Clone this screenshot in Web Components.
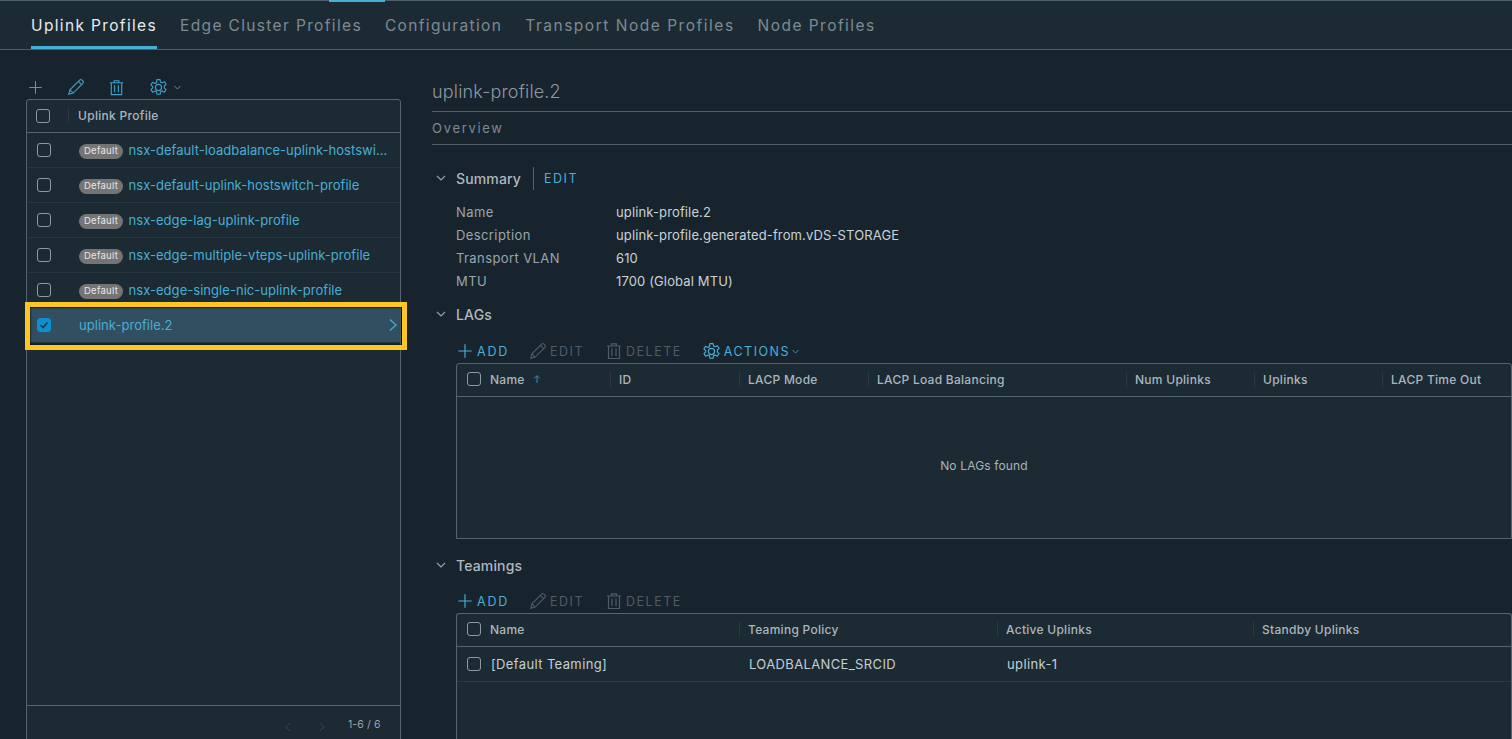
<!DOCTYPE html>
<html><head><meta charset="utf-8"><style>
html,body{margin:0;height:739px;overflow:hidden;background:#18242d;font-family:Inter,"Liberation Sans",sans-serif;color:#c3cdd3}
</style></head><body>
<nsx-page></nsx-page>
<script>
const ICONS={
plus:'<path d="M9 1.500v15M1.500 9h15" fill="none" stroke="currentColor" stroke-width="1.300"/>',
pencil:'<path d="M1.800 16.200l1.100-4.400L12.600 2.100a1.700 1.700 0 0 1 2.400 0l.9.9a1.700 1.700 0 0 1 0 2.400L6.200 15.100zM2.900 11.800l3.300 3.300M11.300 3.400l3.300 3.300" fill="none" stroke="currentColor" stroke-width="1.100"/>',
trash:'<path d="M2 4h14M6.500 4V1.800h5V4M3.500 4v12.500h11V4M7 6.500v7.500M11 6.500v7.500" fill="none" stroke="currentColor" stroke-width="1.200"/>',
gear:'<path d="M7.600 1.500h2.800l.4 2.200 1.400.7 2-1 1.500 2.300-1.600 1.500v1.600l1.600 1.500-1.500 2.300-2-1-1.400.7-.4 2.200H7.600l-.4-2.200-1.400-.7-2 1-1.500-2.300 1.600-1.500V7.700L2.300 6.200l1.500-2.300 2 1 1.400-.7z" fill="none" stroke="currentColor" stroke-width="1" stroke-linejoin="round"/><circle cx="9" cy="8.500" r="2.700" fill="none" stroke="currentColor" stroke-width="1"/>',
chev:'<path d="M3 6l6 6 6-6" fill="none" stroke="currentColor" stroke-width="1.600"/>',
right:'<path d="M5 2l8 7-8 7" fill="none" stroke="currentColor" stroke-width="1.500"/>',
left:'<path d="M13 2L5 9l8 7" fill="none" stroke="currentColor" stroke-width="1.500"/>',
up:'<path d="M9 16V3M4 8l5-5 5 5" fill="none" stroke="currentColor" stroke-width="1.800"/>'
};
const VB={gear:'1.500 1 15 15'};
class Base extends HTMLElement{
  constructor(){super();this.attachShadow({mode:'open'});}
  connectedCallback(){if(!this.shadowRoot.childNodes.length)this.shadowRoot.innerHTML=this.render();}
  a(n,d=''){return this.getAttribute(n)??d;}
}
const def=(n,c)=>customElements.define(n,c);
def('x-icon',class extends Base{render(){const s=this.a('size','18'),n=this.a('name');
 return `<style>:host{display:inline-flex;flex:none;width:${s}px;height:${s}px}svg{width:100%;height:100%;display:block}</style><svg viewBox="${VB[n]||'0 0 18 18'}">${ICONS[n]}</svg>`;}});
def('x-check',class extends Base{render(){const c=this.hasAttribute('checked');
 return `<style>:host{display:block;flex:none;width:12px;height:12px;border:1px solid #8d9aa3;border-radius:3px;background:${c?'#0d8fd0':'transparent'};border-color:${c?'#0d8fd0':'#8d9aa3'}}
 svg{display:block;width:12px;height:12px}</style>${c?'<svg viewBox="0 0 12 12"><path d="M2.500 6l2.500 2.500 4.500-5" fill="none" stroke="#17384d" stroke-width="1.600"/></svg>':''}`;}});
def('x-tab',class extends Base{render(){const on=this.hasAttribute('active');
 return `<style>:host{display:block;height:45px;line-height:49px;font-size:15.500px;letter-spacing:1.350px;white-space:nowrap;color:${on?'#e6ecef':'#7d8a93'};border-bottom:3px solid ${on?'#49afd9':'transparent'}}</style><slot></slot>`;}});
def('x-tabs',class extends Base{render(){return `<style>:host{display:flex;gap:23px;height:48px;padding-left:31px;border-bottom:1px solid #4f5f69;border-top:1px solid #4f5f69;position:relative;background:#1c2a33}
 .mark{position:absolute;left:329px;top:-1px;width:56px;height:2px;background:#49afd9}</style><div class="mark"></div><slot></slot>`;}});
def('x-tool',class extends Base{render(){const dis=this.hasAttribute('disabled');
 return `<style>:host{display:inline-flex;align-items:center;gap:3px;font-size:12.500px;letter-spacing:1.500px;color:${dis?'#4d5c66':'#49afd9'};white-space:nowrap}</style><slot></slot>`;}});
def('x-profile-row',class extends Base{render(){const sel=this.hasAttribute('selected'),def_=this.hasAttribute('default');
 return `<style>:host{display:flex;align-items:center;height:34px;border-bottom:1px solid #26353f;position:relative;background:${sel?'#324f62':'transparent'};font-size:13px;color:#49aed3;white-space:nowrap}
 .c{width:52px;padding-left:10px;box-sizing:border-box;display:flex;flex:none}
 .b{display:inline-block;background:#747474;color:#e8e8e8;font-size:9.500px;line-height:14px;height:15px;padding:0 5px;border-radius:8px;margin-right:5.500px;flex:none;letter-spacing:.25px;position:relative;top:1px}
 .t{overflow:hidden;text-overflow:ellipsis;flex:1;min-width:0;padding-right:12px;letter-spacing:.04px}
 .arrow{position:absolute;right:0;top:10px;color:#49aed3}
 .hl{position:absolute;left:-2px;right:-7px;top:-6px;bottom:-8px;border:5px solid #fcc626;box-shadow:inset 0 0 3px #000;pointer-events:none}
 </style><div class="c"><x-check ${sel?'checked':''}></x-check></div>${def_?'<span class="b">Default</span>':''}<span class="t"><slot></slot></span>${sel?'<x-icon class="arrow" name="right" size="14"></x-icon><div class="hl"></div>':''}`;}});
def('x-profile-list',class extends Base{render(){return `<style>:host{display:flex;flex-direction:column;width:375px;flex:none;box-sizing:border-box;margin-left:26px}
 .bar{display:flex;align-items:center;height:20px;color:#3f9fc8;margin-top:27px;margin-bottom:2px}
 .box{height:700px;border:1px solid #55646e;border-radius:3px 3px 0 0;background:#1c2a33;display:flex;flex-direction:column}
 .h{display:flex;align-items:center;border-bottom:1px solid #55646e;font-size:12px;font-weight:500;color:#aab6bd;flex:none;letter-spacing:.3px;padding-bottom:1px;box-sizing:border-box;height:33px}
 .h x-check{margin-left:9px}.sep{width:1px;height:15px;background:#2a3a44;margin:0 9px 0 18px}
 .rows{height:572px;flex:none;border-bottom:1px solid #55646e}
 .foot{display:flex;align-items:center;height:36px;font-size:10.500px;color:#9aa6ad;padding-left:256px;gap:24px;letter-spacing:.1px}
 .foot x-icon{color:#3b4a54;position:relative;top:3px}.foot span{margin-left:-3px}
 </style><div class="bar">
 <x-icon name="plus" size="15" style="margin-left:2px"></x-icon><x-icon name="pencil" size="18" style="margin-left:24px"></x-icon><x-icon name="trash" size="17" style="margin-left:23px"></x-icon><x-icon name="gear" size="17" style="margin-left:25px"></x-icon><x-icon name="chev" size="9" style="margin-left:6px;color:#8a98a1"></x-icon></div>
 <div class="box"><div class="h"><x-check></x-check><div class="sep"></div>Uplink Profile</div>
 <div class="rows"><slot></slot></div>
 <div class="foot"><x-icon name="left" size="10"></x-icon><x-icon name="right" size="10"></x-icon><span>1-6 / 6</span></div></div>`;}});
def('x-section',class extends Base{render(){return `<style>:host{display:block}
 .h{display:flex;align-items:center;height:20px;font-size:14px;font-weight:500;color:#aeb9c0;letter-spacing:.15px}
 x-icon{color:#9aa7af;margin:0 9px 0 3px}
 .edit{display:flex;align-items:center;height:23px;margin-left:12px;padding-left:10px;border-left:1px solid #55646e;font-size:12.500px;font-weight:400;letter-spacing:1.500px;color:#49afd9}
 </style><div class="h"><x-icon name="chev" size="12"></x-icon>${this.a('title')}${this.hasAttribute('edit')?'<span class="edit">EDIT</span>':''}</div><slot></slot>`;}});
def('x-kv',class extends Base{render(){return `<style>:host{display:grid;grid-template-columns:160px 1fr;height:23px;line-height:23px;font-size:13px;padding-left:24px;color:#b9c4ca}
 .k{color:#9aa6ad;letter-spacing:.4px}.v{color:#c9d2d7;letter-spacing:.13px}</style><span class="k">${this.a('k')}</span><span class="v"><slot></slot></span>`;}});
def('x-grid',class extends Base{render(){
 const cols=JSON.parse(this.a('cols'));const tpl=cols.map(c=>c[1]+'px').join(' ');
 const head=cols.map((c,i)=>`<div class="th ${i?'':'first'}">${i?'<i></i>':'<x-check></x-check>'}<span>${c[0]}</span>${c[2]?'<x-icon name="up" size="10" style="margin-left:7px;color:#2f8fc0"></x-icon>':''}</div>`).join('');
 return `<style>:host{display:block;margin-left:24px;border:1px solid #55646e;border-bottom:none;border-radius:3px 3px 0 0;background:#1c2a33;box-sizing:border-box}
 :host([boxed]){border-bottom:1px solid #55646e}
 .hd{display:grid;grid-template-columns:${tpl};height:32px;border-bottom:1px solid #55646e;align-items:center;font-size:12px;font-weight:500;color:#aab6bd;letter-spacing:.27px}
 .th{display:flex;align-items:center;height:100%;padding-left:9px;box-sizing:border-box;padding-bottom:2px;position:relative;white-space:nowrap}
 .th.first{padding-left:10px}.th.first x-check{margin-right:9px}
 i{position:absolute;left:0;top:8px;width:1px;height:15px;background:#2a3a44}
 </style><div class="hd">${head}</div><slot></slot>`;}});
def('x-empty',class extends Base{render(){return `<style>:host{display:flex;align-items:center;justify-content:center;height:141px;box-sizing:border-box;padding-bottom:4px;font-size:12px;letter-spacing:.15px;color:#a9b4bb}</style><slot></slot>`;}});
def('x-grid-row',class extends Base{render(){const cells=JSON.parse(this.a('cells'));const tpl=JSON.parse(this.a('cols')).map(c=>c+'px').join(' ');
 return `<style>:host{display:grid;grid-template-columns:${tpl};align-items:center;height:34px;border-bottom:1px solid #2b3a44;font-size:13px;color:#c5ced3;letter-spacing:.37px}
 div{padding-left:10px;white-space:nowrap}.f{display:flex;align-items:center;padding-left:10px;gap:10px}
 </style>${cells.map((c,i)=>i?`<div>${c}</div>`:`<div class="f"><x-check></x-check><span>${c}</span></div>`).join('')}`;}});
def('x-detail',class extends Base{render(){return `<style>:host{display:block;flex:1;min-width:0;margin-left:31px;padding-top:30px}
 .title{font-size:18px;line-height:24px;color:#8c99a1;font-weight:300;border-bottom:1px solid #4f5f69;letter-spacing:.17px;box-sizing:border-box;height:32px}
 .ov{height:33px;line-height:33px;font-size:13px;letter-spacing:1.700px;color:#7d8a93;border-bottom:1px solid #4f5f69;box-sizing:border-box}
 </style><div class="title">uplink-profile.2</div><div class="ov">Overview</div><slot></slot>`;}});
def('nsx-page',class extends Base{render(){
 const C1=[['Name',153,1],['ID',129],['LACP Mode',129],['LACP Load Balancing',258],['Num Uplinks',128],['Uplinks',128],['LACP Time Out',125]];
 const C2=[['Name',282],['Teaming Policy',258],['Active Uplinks',256],['Standby Uplinks',258]];
 const bar=m=>`display:flex;align-items:center;height:22px;margin:${m}px 0 1px 25px`;
 const tools=(a)=>`<x-tool style="gap:4px;letter-spacing:1.800px"><x-icon name="plus" size="16"></x-icon>ADD</x-tool>
 <x-tool disabled style="margin-left:20px"><x-icon name="pencil" size="18"></x-icon>EDIT</x-tool>
 <x-tool disabled style="margin-left:21px"><x-icon name="trash" size="18"></x-icon>DELETE</x-tool>${a?'<x-tool style="margin-left:21px;gap:4px"><x-icon name="gear" size="17"></x-icon>ACTIONS<x-icon name="chev" size="9" style="margin-left:-3px"></x-icon></x-tool>':''}`;
 return `<style>:host{display:block;height:739px;overflow:hidden}
 .main{display:flex}
 </style>
 <x-tabs><x-tab active>Uplink Profiles</x-tab><x-tab>Edge Cluster Profiles</x-tab><x-tab>Configuration</x-tab><x-tab style="letter-spacing:1.520px">Transport Node Profiles</x-tab><x-tab style="letter-spacing:1.460px">Node Profiles</x-tab></x-tabs>
 <div class="main">
 <x-profile-list>
 <x-profile-row default>nsx-default-loadbalance-uplink-hostswitch-profile</x-profile-row>
 <x-profile-row default>nsx-default-uplink-hostswitch-profile</x-profile-row>
 <x-profile-row default>nsx-edge-lag-uplink-profile</x-profile-row>
 <x-profile-row default>nsx-edge-multiple-vteps-uplink-profile</x-profile-row>
 <x-profile-row default>nsx-edge-single-nic-uplink-profile</x-profile-row>
 <x-profile-row selected>uplink-profile.2</x-profile-row>
 </x-profile-list>
 <x-detail>
 <x-section title="Summary" edit style="margin-top:23px">
   <div style="height:13px"></div>
   <x-kv k="Name">uplink-profile.2</x-kv><x-kv k="Description">uplink-profile.generated-from.vDS-STORAGE</x-kv><x-kv k="Transport VLAN">610</x-kv><x-kv k="MTU">1700 (Global MTU)</x-kv>
 </x-section>
 <x-section title="LAGs" style="margin-top:11px">
   <div style="${bar(16)}">${tools(1)}</div>
   <x-grid boxed cols='${JSON.stringify(C1)}'><x-empty>No LAGs found</x-empty></x-grid>
 </x-section>
 <x-section title="Teamings" style="margin-top:16px">
   <div style="${bar(15)}">${tools(0)}</div>
   <x-grid style="height:200px" cols='${JSON.stringify(C2)}'><x-grid-row cols='[282,258,256,258]' cells='["[Default Teaming]","LOADBALANCE_SRCID","uplink-1",""]'></x-grid-row></x-grid>
 </x-section>
 </x-detail></div>`;}});
</script></body></html>
